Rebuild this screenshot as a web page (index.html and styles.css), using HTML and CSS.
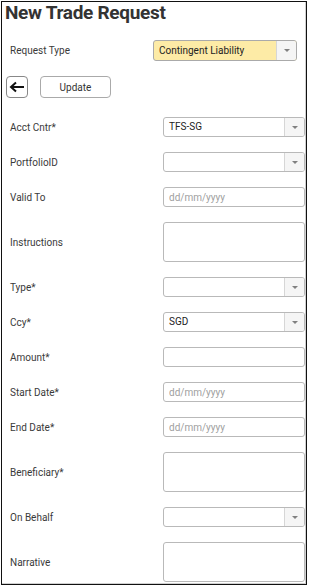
FILE: index.html
```html
<!DOCTYPE html>
<html lang="en">
<head>
  <meta charset="UTF-8" />
  <title>New Trade Request</title>
  <meta name="viewport" content="width=device-width, initial-scale=1.0" />
  <link rel="stylesheet" href="styles.css">
</head>
<body>
  <div class="frame">
    <h1 class="page-title">New Trade Request</h1>

    <div class="type-row">
      <label class="field-label">Request Type</label>
      <div class="dropdown dropdown-type">
        <span class="dropdown-value">Contingent Liability</span>
        <span class="dropdown-caret"></span>
      </div>
    </div>

    <div class="actions">
      <button class="btn btn-back" type="button" aria-label="Back">
        <svg width="16" height="12" viewBox="0 0 16 12">
          <path d="M15 6H2.5M7 1.5L2 6l5 4.5" fill="none" stroke="#111" stroke-width="2"/>
        </svg>
      </button>
      <button class="btn btn-update" type="button">Update</button>
    </div>

    <form class="trade-form">
      <div class="form-row">
        <label class="field-label">Acct Cntr*</label>
        <div class="dropdown"><span class="dropdown-value">TFS-SG</span><span class="dropdown-caret"></span></div>
      </div>
      <div class="form-row">
        <label class="field-label">PortfolioID</label>
        <div class="dropdown"><span class="dropdown-value"></span><span class="dropdown-caret"></span></div>
      </div>
      <div class="form-row">
        <label class="field-label">Valid To</label>
        <input class="text-input" placeholder="dd/mm/yyyy" />
      </div>
      <div class="form-row">
        <label class="field-label">Instructions</label>
        <textarea class="text-area"></textarea>
      </div>
      <div class="form-row">
        <label class="field-label">Type*</label>
        <div class="dropdown"><span class="dropdown-value"></span><span class="dropdown-caret"></span></div>
      </div>
      <div class="form-row">
        <label class="field-label">Ccy*</label>
        <div class="dropdown"><span class="dropdown-value">SGD</span><span class="dropdown-caret"></span></div>
      </div>
      <div class="form-row">
        <label class="field-label">Amount*</label>
        <input class="text-input" />
      </div>
      <div class="form-row">
        <label class="field-label">Start Date*</label>
        <input class="text-input" placeholder="dd/mm/yyyy" />
      </div>
      <div class="form-row">
        <label class="field-label">End Date*</label>
        <input class="text-input" placeholder="dd/mm/yyyy" />
      </div>
      <div class="form-row">
        <label class="field-label">Beneficiary*</label>
        <textarea class="text-area"></textarea>
      </div>
      <div class="form-row">
        <label class="field-label">On Behalf</label>
        <div class="dropdown"><span class="dropdown-value"></span><span class="dropdown-caret"></span></div>
      </div>
      <div class="form-row">
        <label class="field-label">Narrative</label>
        <textarea class="text-area"></textarea>
      </div>
    </form>
  </div>
</body>
</html>
```

FILE: styles.css
```css
body {
  margin: 0;
  padding: 1px;
  background: #fff;
  font-family: Roboto, "Liberation Sans", sans-serif;
  color: #333;
}

.frame {
  width: 306px;
  height: 584px;
  box-sizing: border-box;
  border: 1px solid #111;
  box-shadow: inset -1px -1px 0 #d0d0d0;
  padding: 0 1px 0 3px;
  overflow: hidden;
}

.page-title {
  margin: 0;
  font-size: 19px;
  line-height: 22px;
  font-weight: bold;
  letter-spacing: -0.3px;
  color: #333;
}

.field-label {
  font-size: 10px;
  color: #3a3a3a;
  padding-left: 5px;
}

.type-row {
  display: flex;
  align-items: center;
  justify-content: space-between;
  margin-top: 16px;
  padding-right: 8px;
}

.dropdown {
  display: flex;
  width: 142px;
  height: 20px;
  box-sizing: border-box;
  border: 1px solid #b9b9b9;
  border-radius: 3px;
  background: #fff;
  overflow: hidden;
}

.dropdown-type {
  width: 144px;
  height: 21px;
  background: #fdeba6;
  border-color: #aaa;
}

.dropdown-value {
  flex: 1;
  padding-left: 5px;
  font-size: 10px;
  line-height: 18px;
  color: #222;
}

.dropdown-type .dropdown-value {
  line-height: 19px;
}

.dropdown-caret {
  width: 19px;
  display: flex;
  align-items: center;
  justify-content: center;
  border-left: 1px solid #d6d6d6;
  background: #f5f5f5;
}

.dropdown-caret::after {
  content: "";
  border-left: 3px solid transparent;
  border-right: 3px solid transparent;
  border-top: 3px solid #808080;
}

.actions {
  display: flex;
  gap: 12px;
  margin-top: 15px;
  padding-left: 1px;
}

.btn {
  height: 22px;
  box-sizing: border-box;
  border: 1px solid #aaa;
  border-radius: 4px;
  background: #fff;
  font-family: inherit;
  font-size: 10px;
  color: #333;
  padding: 0;
  cursor: pointer;
}

.btn-back {
  width: 22px;
  display: flex;
  align-items: center;
  justify-content: center;
  border-color: #888;
}

.btn-update {
  width: 71px;
}

.trade-form {
  display: flex;
  flex-direction: column;
  gap: 15px;
  margin-top: 19px;
}

.form-row {
  display: flex;
  align-items: center;
  justify-content: space-between;
}

.text-input,
.text-area {
  width: 142px;
  box-sizing: border-box;
  border: 1px solid #b9b9b9;
  border-radius: 3px;
  font-family: inherit;
  font-size: 10px;
  color: #222;
  padding: 0 5px;
  margin: 0;
  outline: none;
}

.text-input {
  height: 20px;
}

.text-input::placeholder {
  color: #a0a0a0;
}

.text-area {
  height: 40px;
  resize: none;
  display: block;
}
```
